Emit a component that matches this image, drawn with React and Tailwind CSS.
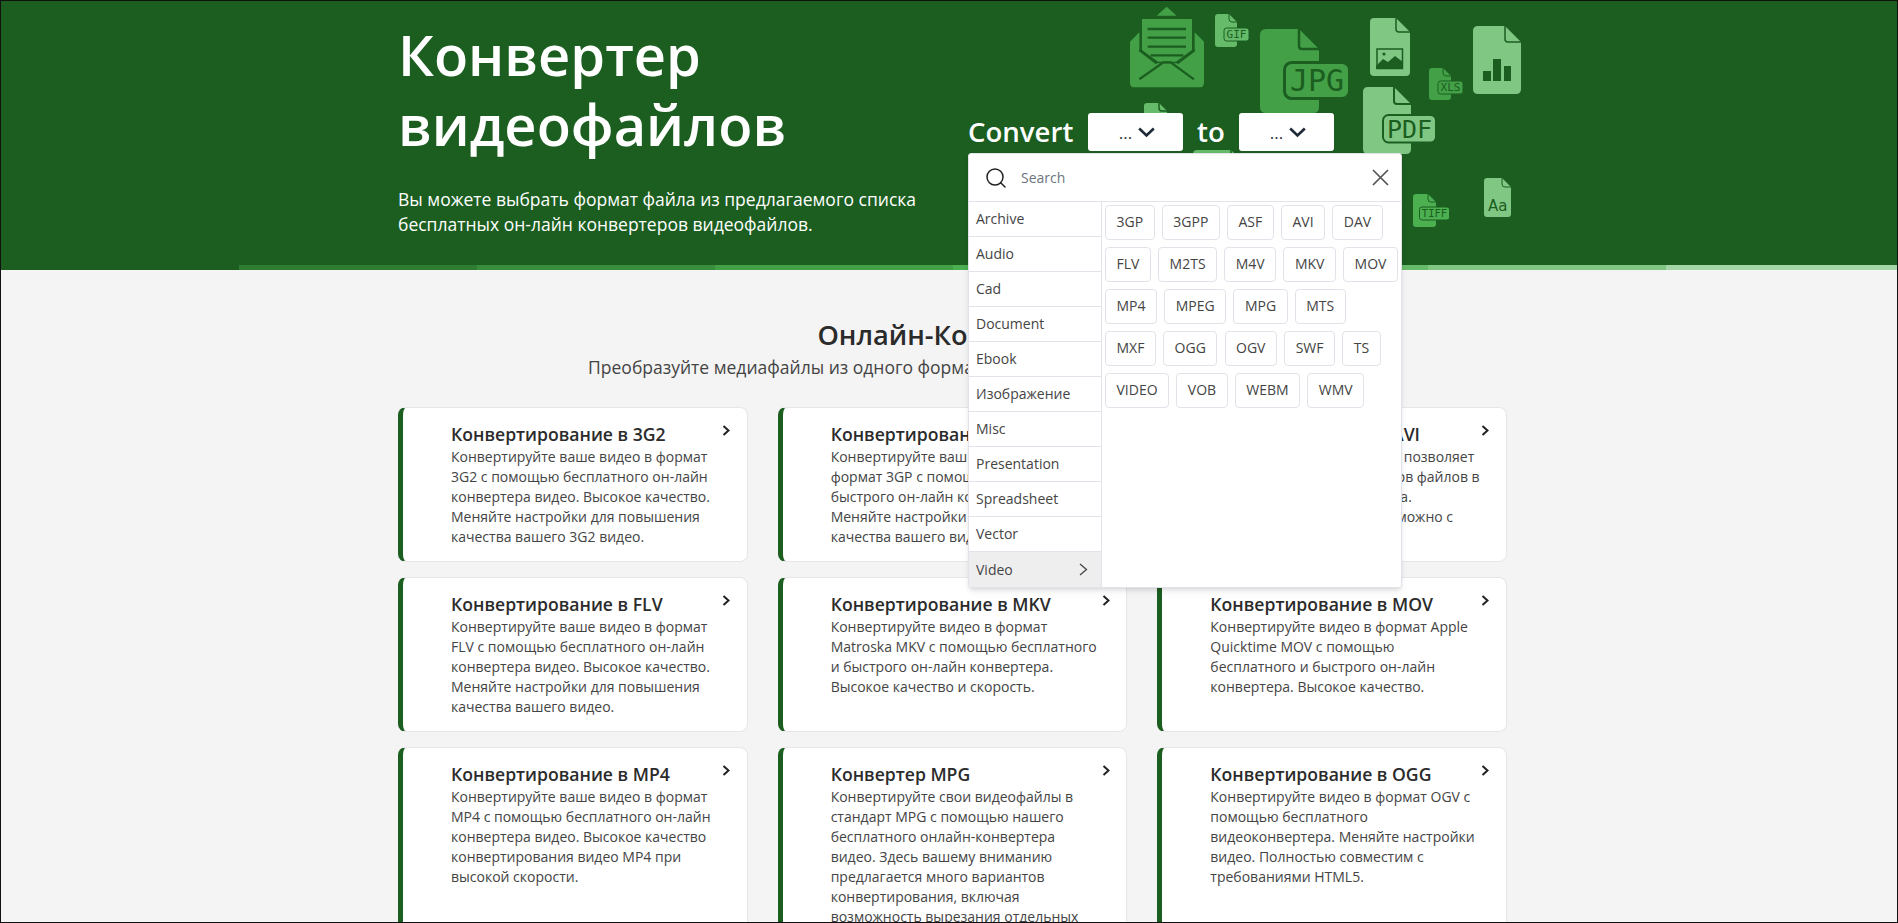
import React from 'react';
import { Search } from 'lucide-react';

const DARK = '#1b5e20';

const stripes = [
  'w-[239px] bg-[#1b5e20]',
  'w-[238px] bg-[#2e7d32]',
  'w-[238px] bg-[#388e3c]',
  'w-[238px] bg-[#43a047]',
  'w-[237px] bg-[#4caf50]',
  'w-[238px] bg-[#66bb6a]',
  'w-[238px] bg-[#81c784]',
  'flex-1 bg-[#a5d6a7]',
];

const categories = ['Archive', 'Audio', 'Cad', 'Document', 'Ebook', 'Изображение', 'Misc', 'Presentation', 'Spreadsheet', 'Vector', 'Video'];

const formats = [
  '3GP', '3GPP', 'ASF', 'AVI', 'DAV', 'FLV', 'M2TS', 'M4V', 'MKV', 'MOV', 'MP4', 'MPEG', 'MPG', 'MTS',
  'MXF', 'OGG', 'OGV', 'SWF', 'TS', 'VIDEO', 'VOB', 'WEBM', 'WMV',
];

const cards = [
  { title: 'Конвертирование в 3G2', text: 'Конвертируйте ваше видео в формат 3G2 с помощью бесплатного он-лайн конвертера видео. Высокое качество. Меняйте настройки для повышения качества вашего 3G2 видео.' },
  { title: 'Конвертирование в 3GP', text: 'Конвертируйте ваши видеофайлы в формат 3GP с помощью бесплатного и быстрого он-лайн конвертера видео. Меняйте настройки для повышения качества вашего видео.' },
  { title: 'Конвертирование в AVI', text: 'Этот он-лайн конвертер AVI позволяет конвертировать много видов файлов в видео AVI высокого качества. Настройки качества видео можно с легкостью изменить.' },
  { title: 'Конвертирование в FLV', text: 'Конвертируйте ваше видео в формат FLV с помощью бесплатного он-лайн конвертера видео. Высокое качество. Меняйте настройки для повышения качества вашего видео.' },
  { title: 'Конвертирование в MKV', text: 'Конвертируйте видео в формат Matroska MKV с помощью бесплатного и быстрого он-лайн конвертера. Высокое качество и скорость.' },
  { title: 'Конвертирование в MOV', text: 'Конвертируйте видео в формат Apple Quicktime MOV с помощью бесплатного и быстрого он-лайн конвертера. Высокое качество.' },
  { title: 'Конвертирование в MP4', text: 'Конвертируйте ваше видео в формат MP4 с помощью бесплатного он-лайн конвертера видео. Высокое качество конвертирования видео MP4 при высокой скорости.' },
  { title: 'Конвертер MPG', text: 'Конвертируйте свои видеофайлы в стандарт MPG с помощью нашего бесплатного онлайн-конвертера видео. Здесь вашему вниманию предлагается много вариантов конвертирования, включая возможность вырезания отдельных фрагментов видео и многое другое.' },
  { title: 'Конвертирование в OGG', text: 'Конвертируйте видео в формат OGV с помощью бесплатного видеоконвертера. Меняйте настройки видео. Полностью совместим с требованиями HTML5.' },
];

// file shape with the cut corner and the crease of the fold
const Doc = ({ x, y, w, h, f, color, r = 4, crease = 1.5 }) => (
  <g>
    <path
      d={`M${x + r} ${y}H${x + w - f}L${x + w} ${y + f}V${y + h - r}Q${x + w} ${y + h} ${x + w - r} ${y + h}H${x + r}Q${x} ${y + h} ${x} ${y + h - r}V${y + r}Q${x} ${y} ${x + r} ${y}Z`}
      fill={color}
    />
    <path
      d={`M${x + w - f} ${y - 1}V${y + f - 3}Q${x + w - f} ${y + f} ${x + w - f + 3} ${y + f}H${x + w + 1}`}
      fill="none"
      stroke={DARK}
      strokeWidth={crease}
    />
  </g>
);

const Badge = ({ x, y, w, h, color, label, size, line = 1.5, weight = 400 }) => (
  <g>
    <rect x={x} y={y} width={w} height={h} rx={h / 5} fill={color} stroke={DARK} strokeWidth={line} />
    <text
      x={x + w / 2}
      y={y + h / 2 + size * 0.36}
      textAnchor="middle"
      fontFamily="'DejaVu Sans Mono', monospace"
      fontSize={size}
      fontWeight={weight}
      fill={DARK}
    >
      {label}
    </text>
  </g>
);

const HeroIcons = () => (
  <svg className="absolute left-0 top-0" width="1898" height="265" viewBox="0 0 1898 265">
    {/* envelope, coordinates taken at 3x */}
    <g transform="translate(1100 0) scale(0.3333)" fill="#43a047">
      <path d="M170 47L200 20L230 47Z" />
      <path d="M90 125L118 97V152L170 190H232L284 152V97L312 125V248Q312 262 298 262H104Q90 262 90 248Z" />
      <path d="M126 57H276V150L228 185H174L126 150Z" />
      <g stroke={DARK} strokeWidth="7" fill="none">
        <path d="M143 87H258M143 113H258M143 140H258M152 166H250" />
        <path d="M118 238L190 187H212L282 238" />
        <path d="M118 150L170 190M284 150L232 190" />
      </g>
    </g>

    <Doc x={1144} y={103} w={23} h={34} f={8} color="#66bb6a" r={3} />
    <Doc x={1193} y={150} w={44} h={40} f={6} color="#66bb6a" />

    <Doc x={1215} y={14} w={22} h={33} f={8} color="#66bb6a" r={3} crease={1} />
    <Badge x={1224} y={28} w={25} h={13} color="#66bb6a" label="GIF" size={11} line={1} />

    <Doc x={1260} y={29} w={59} h={84} f={20} color="#43a047" r={6} crease={2.5} />
    <Badge x={1284.5} y={62.5} w={65} h={36} color="#43a047" label="JPG" size={30} line={3} />

    <Doc x={1370} y={18} w={40} h={58} f={14} color="#81c784" r={4} />
    <g>
      <rect x={1377} y={49} width={25.5} height={19.5} fill="none" stroke={DARK} strokeWidth="1.5" />
      <circle cx={1384} cy={54} r={1.6} fill={DARK} />
      <path d="M1376 66L1383 59L1388 62L1395 56L1403 62V69H1376Z" fill={DARK} />
    </g>

    <Doc x={1363} y={87} w={48} h={67} f={17} color="#81c784" r={5} crease={2} />
    <Badge x={1383} y={115} w={53} h={27.5} color="#81c784" label="PDF" size={25} line={2} />

    <Doc x={1429} y={68} w={22} h={32} f={8} color="#43a047" r={3} crease={1} />
    <Badge x={1438} y={81} w={25} h={13} color="#43a047" label="XLS" size={11} line={1} />

    <Doc x={1473} y={26} w={48} h={68} f={16} color="#81c784" r={5} />
    <path d="M1483 71h8v10h-8zM1493 59h8v22h-8zM1504 66h7v15h-7z" fill={DARK} />

    <Doc x={1413} y={194} w={23} h={33} f={8} color="#4caf50" r={3} crease={1} />
    <Badge x={1419.5} y={207} w={30} h={13} color="#4caf50" label="TIFF" size={10.5} line={1} />

    <Doc x={1484} y={178} w={27} h={39} f={9} color="#81c784" r={3} crease={1} />
    <text x={1488} y={211} fontFamily="'DejaVu Sans', sans-serif" fontSize="15" fill={DARK}>Aa</text>
  </svg>
);

const ButtonChevron = () => (
  <svg width="17" height="11" viewBox="0 0 17 11" fill="none" stroke="#1f2937" strokeWidth="2.6">
    <path d="M1.2 1.5L8.5 8.5L15.8 1.5" />
  </svg>
);

const FormatPicker = () => (
  <button className="flex h-[38px] w-[95px] shrink-0 items-center justify-center gap-[6px] rounded-[3px] bg-white pl-[3px] text-[17px] font-normal text-[#333]">
    <span className="leading-none">...</span>
    <ButtonChevron />
  </button>
);

const Dropdown = () => (
  <div className="absolute left-0 top-[40px] z-20 h-[435px] w-[434px] overflow-hidden rounded-[3px] border border-[#e2e2ea] bg-white text-[14px] font-normal shadow-md">
    <div className="flex h-[48px] items-center border-b border-[#e2e2ea] pl-[15px] pr-[12px]">
      <Search className="h-6 w-6 shrink-0 text-[#222]" strokeWidth={1.5} />
      <input
        className="ml-[13px] min-w-0 flex-1 bg-transparent pb-[1px] text-[14px] outline-none placeholder:text-[#6c757d]"
        placeholder="Search"
        readOnly
      />
      <svg width="17" height="17" viewBox="0 0 17 17" fill="none" stroke="#555" strokeWidth="1.7">
        <path d="M1 1L16 16M16 1L1 16" />
      </svg>
    </div>
    <div className="flex">
      <ul className="w-[133px] shrink-0 border-r border-[#e2e2ea]">
        {categories.map((name) => (
          <li
            key={name}
            className={`flex h-[35px] items-center justify-between border-b border-[#e2e2ea] pb-[1px] pl-[7px] pr-[13px] text-[#444] last:border-b-0 ${name === 'Video' ? 'bg-[#eeeeee]' : ''}`}
          >
            {name}
            {name === 'Video' && (
              <svg width="9" height="13" viewBox="0 0 9 13" fill="none" stroke="#444" strokeWidth="1.3">
                <path d="M1 1L7.5 6.5L1 12" />
              </svg>
            )}
          </li>
        ))}
      </ul>
      <div className="flex flex-1 flex-wrap content-start gap-x-[7.2px] gap-y-[7px] pl-[3px] pt-[3px]">
        {formats.map((fmt) => (
          <span
            key={fmt}
            className="flex h-[35px] items-center rounded-[4px] border border-[#e2e2ea] px-[10.5px] pb-[3px] text-[#444]"
          >
            {fmt}
          </span>
        ))}
      </div>
    </div>
  </div>
);

const Card = ({ title, text }) => (
  <div className="flex rounded-[8px] border border-l-[5px] border-[#e6e6e6] border-l-[#1b5e20] bg-white py-[14px] pl-[48px]">
    <div className="w-[270px]">
      <h3 className="text-[17.6px] font-semibold leading-[25px] text-[#2b2b2b]">{title}</h3>
      <p className="text-[14px] leading-[20px] text-[#444]">{text}</p>
    </div>
    <svg className="ml-[1px] mt-[3px] shrink-0" width="9" height="11" viewBox="0 0 9 11" fill="none" stroke="#222" strokeWidth="2">
      <path d="M1.5 1L6.5 5.5L1.5 10" />
    </svg>
  </div>
);

const App = () => {
  return (
    <div className="relative h-[923px] overflow-hidden bg-[#f4f4f4] font-['Open_Sans',sans-serif]">
      <header className="relative bg-[#1b5e20]">
        <HeroIcons />
        <div className="relative flex h-[265px] pl-[398px]">
          <div className="w-[570px] pt-[19px] text-white">
            <h1 className="text-[56px] font-semibold leading-[70px]">
              Конвертер
              <br />
              видеофайлов
            </h1>
            <p className="mt-[28px] text-[17.5px] leading-[25px]">
              Вы можете выбрать формат файла из предлагаемого списка
              <br />
              бесплатных он-лайн конвертеров видеофайлов.
            </p>
          </div>
          <div className="relative mt-[113px] h-[38px] w-[434px]">
            <div className="flex h-[38px] items-center text-[27.6px] font-semibold text-white">
              <span className="w-[120px]">Convert</span>
              <FormatPicker />
              <span className="ml-[14px] w-[42px]">to</span>
              <FormatPicker />
            </div>
            <Dropdown />
          </div>
        </div>
        <div className="relative flex h-[5px]">
          {stripes.map((cls) => (
            <div key={cls} className={cls} />
          ))}
        </div>
      </header>

      <main className="pt-[47px]">
        <h2 className="text-center text-[27.2px] font-semibold leading-[36px] text-[#2b2b2b]">Онлайн-Конвертер</h2>
        <p className="mt-[2px] text-center text-[17.5px] leading-[24px] text-[#444]">
          Преобразуйте медиафайлы из одного формата в другой с бесплатным конвертером
        </p>
        <div className="ml-[398px] mt-[28px] grid w-[1109px] grid-cols-3 gap-x-[30px] gap-y-[15px]">
          {cards.map((card) => (
            <Card key={card.title} {...card} />
          ))}
        </div>
      </main>

      {/* thin dark frame of the window */}
      <div className="pointer-events-none absolute inset-0 z-30 border border-[#111]" />
    </div>
  );
};

export default App;
